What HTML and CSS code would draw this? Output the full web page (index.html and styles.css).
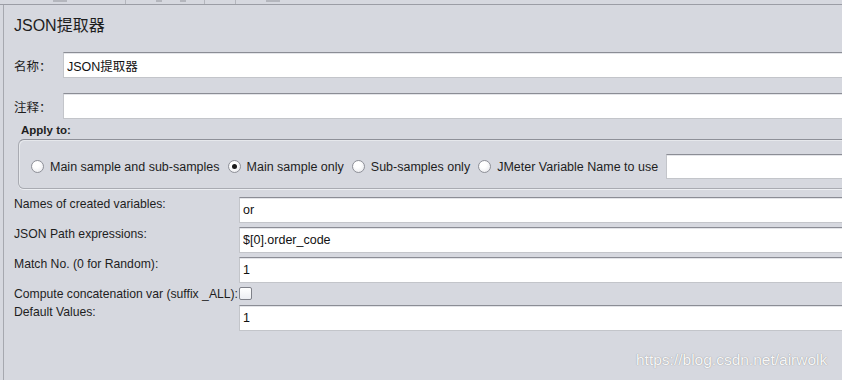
FILE: index.html
```html
<!DOCTYPE html>
<html lang="zh-CN">
<head>
  <meta charset="UTF-8" />
  <meta name="viewport" content="width=device-width, initial-scale=1.0"/>
  <title>JSON提取器</title>
  <link rel="stylesheet" href="styles.css">
</head>
<body>

  <!-- Toolbar remnant at the top edge -->
  <div class="toolbar">
    <span class="tb-mark tb-wide"></span>
    <span class="tb-mark tb-tick"></span>
    <span class="tb-mark tb-small"></span>
    <span class="tb-mark tb-small"></span>
    <span class="tb-mark tb-tick"></span>
    <span class="tb-mark tb-tick"></span>
    <span class="tb-mark tb-wide"></span>
  </div>

  <div class="panel">
    <div class="title">JSON提取器</div>

    <div class="field-row first">
      <span class="field-label">名称：</span>
      <input class="text-input" type="text" value="JSON提取器" />
    </div>
    <div class="field-row">
      <span class="field-label">注释：</span>
      <input class="text-input" type="text" value="" />
    </div>

    <!-- Apply to group -->
    <div class="apply-title">Apply to:</div>
    <div class="apply-box">
      <label class="radio-item"><span class="radio"></span>Main sample and sub-samples</label>
      <label class="radio-item"><span class="radio checked"></span>Main sample only</label>
      <label class="radio-item"><span class="radio"></span>Sub-samples only</label>
      <label class="radio-item"><span class="radio"></span>JMeter Variable Name to use</label>
      <input class="text-input var-input" type="text" value="" />
    </div>

    <!-- Extractor settings -->
    <div class="settings">
      <div class="setting-label">Names of created variables:</div>
      <input class="text-input" type="text" value="or" />

      <div class="setting-label">JSON Path expressions:</div>
      <input class="text-input" type="text" value="$[0].order_code" />

      <div class="setting-label">Match No. (0 for Random):</div>
      <input class="text-input" type="text" value="1" />

      <div class="setting-label middle">Compute concatenation var (suffix _ALL):</div>
      <div><span class="checkbox"></span></div>

      <div class="setting-label">Default Values:</div>
      <input class="text-input" type="text" value="1" />
    </div>
  </div>

  <div class="watermark">https://blog.csdn.net/airwolk</div>

</body>
</html>
```

FILE: styles.css
```css
body {
  font-family: 'Liberation Sans', 'Noto Sans CJK SC', sans-serif;
  font-size: 12.5px;
  color: #1e1e1e;
  margin: 0;
  background-color: #d6d8df;
  height: 380px;
  overflow: hidden;
  position: relative;
}

.toolbar {
  height: 4px;
  border-bottom: 1px solid #9b9da5;
  display: flex;
  align-items: flex-start;
  padding-left: 53px;
}

.tb-mark {
  height: 2px;
  background-color: #b4b6bd;
}

.tb-wide {
  width: 14px;
  margin-right: 58px;
}

.tb-tick {
  width: 1px;
  height: 4px;
  margin-right: 30px;
}

.tb-small {
  width: 6px;
  margin-right: 18px;
}

.panel {
  margin-left: 3px;
  border-left: 1px solid #a6a8af;
  padding-left: 10px;
  width: 900px;
  height: 375px;
}

.title {
  font-size: 16px;
  line-height: 20px;
  padding-top: 11px;
}

.field-row {
  display: flex;
  align-items: center;
  margin-top: 15px;
}

.field-row.first {
  margin-top: 16px;
}

.field-label {
  width: 49px;
  flex-shrink: 0;
}

.text-input {
  box-sizing: border-box;
  height: 26px;
  flex: 1;
  min-width: 0;
  margin: 0;
  padding: 0 3px;
  font: inherit;
  color: #111;
  background-color: #fff;
  border: 1px solid #c3c5ca;
  border-top-color: #8b8d95;
  box-shadow: inset 0 1px 0 #e4e5e9;
  outline: none;
}

.apply-title {
  font-size: 11.5px;
  font-weight: bold;
  line-height: 14px;
  margin: 4px 0 2px 7px;
}

.apply-box {
  display: flex;
  align-items: center;
  margin-left: 4px;
  padding: 14px 0 9px 12px;
  border: 1px solid #a9abb2;
  border-top-color: #8e9098;
  border-radius: 6px;
  box-shadow: 0 1px 0 #eceef2, inset 1px 1px 0 #e6e8ec;
}

.radio-item {
  display: flex;
  align-items: center;
  white-space: nowrap;
  margin-right: 8px;
}

.radio {
  box-sizing: border-box;
  width: 13px;
  height: 13px;
  margin-right: 6px;
  border: 1px solid #8e9098;
  border-radius: 50%;
  background: radial-gradient(circle at 40% 35%, #ffffff 30%, #e2e3e8 100%);
  display: flex;
  align-items: center;
  justify-content: center;
}

.radio.checked::after {
  content: '';
  width: 5px;
  height: 5px;
  border-radius: 50%;
  background-color: #1a1a1a;
}

.var-input {
  height: 25px;
}

.settings {
  display: grid;
  grid-template-columns: 225px 1fr;
  row-gap: 4px;
  margin-top: 8px;
}

.setting-label {
  font-size: 12.2px;
  line-height: 14px;
  white-space: nowrap;
}

.setting-label.middle {
  align-self: center;
}

.checkbox {
  display: block;
  box-sizing: border-box;
  width: 13px;
  height: 13px;
  border: 1px solid #7f8189;
  border-radius: 2px;
  background: linear-gradient(#ffffff, #eceef2);
}

.watermark {
  position: absolute;
  left: 636px;
  top: 351px;
  font-size: 15.5px;
  color: rgba(255, 255, 255, 0.95);
  text-shadow: 0 0 1px rgba(90, 90, 90, 0.7);
}
```
